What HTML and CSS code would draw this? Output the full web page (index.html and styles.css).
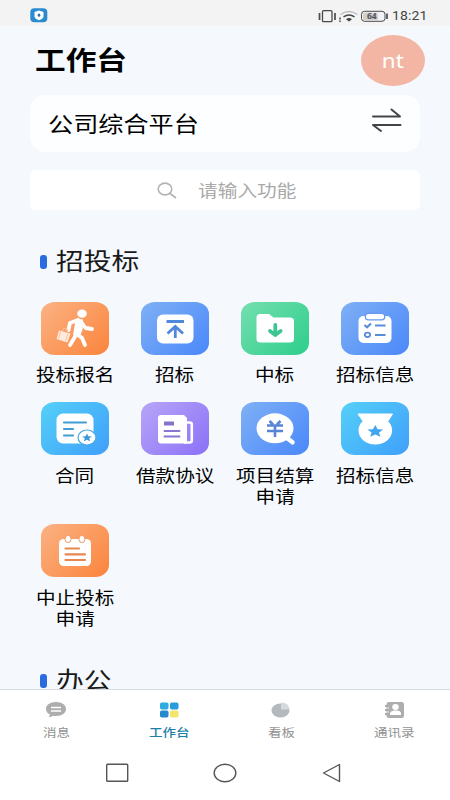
FILE: index.html
```html
<!DOCTYPE html>
<html lang="zh-CN">
<head>
<meta charset="utf-8">
<title>工作台</title>
<link rel="stylesheet" href="styles.css">
</head>
<body>
<header class="status">
  <svg class="app-badge" width="18" height="15" viewBox="0 0 18 15"><rect x=".3" y=".3" width="17" height="14" rx="4" fill="#2a8bd0"/><path d="M9 2.5 13.5 4v4.5Q13 11 9 12.2 5 11 4.500 8.500V4Z" fill="#fff"/><ellipse cx="9" cy="7.200" rx="1.300" ry="1.600" fill="#2472b4"/></svg>
  <svg class="signals" width="70" height="16" viewBox="0 0 70 16" fill="none" stroke="#4a4a4a">
    <rect x="4.500" y="2.700" width="9.500" height="11" rx="1" stroke-width="1.300"/>
    <path d="M1.500 5v7M17 5v7" stroke-width="1.700"/>
    <path d="M22 9.500v2M22 12.500v1.500" stroke-width="1.500"/>
    <path d="M22.500 6.500Q31 .5 39.500 6.500" stroke="#aaa"/><path d="M25.500 8.900Q31 5 36.500 8.900" stroke-width="1.500"/><path d="M28 11.200Q31 9 34 11.200L31 13.500Z" fill="#444" stroke="none"/>
    <rect x="43.500" y="3.300" width="23.500" height="10" rx="3"/><rect x="45" y="4.700" width="15" height="7.300" rx="1.500" fill="#cfcfcf" stroke="none"/><path d="M69 5.500v5.500" stroke-width="1.700"/>
    <text x="49" y="11.300" class="battery" stroke="none">64</text>
  </svg>
  <span class="clock">18:21</span>
</header>

<main class="content">
  <div class="head"><h1 class="wide">工作台</h1><div class="avatar"><span>nt</span></div></div>
  <div class="company"><span class="wide">公司综合平台</span>
    <svg width="32" height="26" viewBox="0 0 32 26" fill="none" stroke="#444" stroke-width="2" stroke-linecap="round" stroke-linejoin="round"><path d="M2 9.500H29L20.500 2.500M29.500 18H2L10 24"/></svg>
  </div>
  <div class="search">
    <svg width="20" height="17" viewBox="0 0 20 17" fill="none" stroke="#b3b3b3" stroke-width="1.600"><ellipse cx="8" cy="7" rx="6.800" ry="5.900"/><path d="M13 11.500 19 16"/></svg>
    <span class="wide">请输入功能</span>
  </div>
  <h2 class="section"><i></i><span class="wide">招投标</span></h2>
  <div class="grid">
    <div class="item"><svg class="tile orange" viewBox="0 0 68 53">
      <ellipse cx="41" cy="11.700" rx="4.800" ry="4.100" fill="#fff"/>
      <path d="M37 18 29 21 27.500 28M38 19 35 33 29 43M36 32 41 36 44 43M41 21 44.500 26 51 27" fill="none" stroke="#fff" stroke-width="3.800" stroke-linecap="round" stroke-linejoin="round"/>
      <path d="M35 16.500 42 17.500 41.500 28 38.500 35 32 33Z" fill="#fff"/>
      <path d="M18 28.500 29.500 31.500 26.500 40.500 15.500 37Z" fill="#ffe9dc"/><path d="M21.500 29 22.500 26.500 27 27.500 26 30.500M19.500 29.500 17.500 37M27 31.500 24.500 39" fill="none" stroke="#ffc29d" stroke-width="1"/>
    </svg><span class="label">投标报名</span></div>
    <div class="item"><svg class="tile blue" viewBox="0 0 68 53">
      <rect x="16" y="12.500" width="36.500" height="29" rx="6" fill="#fff"/>
      <path d="M25.500 19.500H43M34.300 36V25M26.500 31.500 34.300 24.500 42 31.500" fill="none" stroke="#5288dc" stroke-width="2.800"/>
    </svg><span class="label">招标</span></div>
    <div class="item"><svg class="tile green" viewBox="0 0 68 53">
      <path d="M19 12H28L32.500 15.500H49Q53 15.500 53 19V37Q53 40.500 49 40.500H19.500Q15.500 40.500 15.500 37V15.500Q15.500 12 19 12Z" fill="#fff"/>
      <path d="M34.300 23V33M29 29 34.300 33 39.600 29" fill="none" stroke="#3fc494" stroke-width="3.800" stroke-linecap="round" stroke-linejoin="round"/>
    </svg><span class="label">中标</span></div>
    <div class="item"><svg class="tile blue" viewBox="0 0 68 53">
      <rect x="17.500" y="14" width="33" height="27" rx="5" fill="#fff"/>
      <rect x="24.300" y="11.300" width="19.500" height="6.500" rx="3.250" fill="#fff" stroke="#6499ee" stroke-width="1.300"/>
      <path d="M23.500 23 26 25.300 30 21.500M34 23.500H44.500M34 33H44.500" fill="none" stroke="#588bdc" stroke-width="2.200"/><ellipse cx="26.500" cy="32.800" rx="2.700" ry="2.200" fill="none" stroke="#588bdc" stroke-width="1.800"/>
    </svg><span class="label">招标信息</span></div>

    <div class="item"><svg class="tile cyan" viewBox="0 0 68 53">
      <rect x="15.500" y="11.500" width="37" height="30" rx="6.500" fill="#fff"/>
      <path d="M23 20.500H45M23 27H32M23 33.500H32" stroke="#429cd5" stroke-width="2.200" stroke-linecap="round"/>
      <ellipse cx="46" cy="35.500" rx="9" ry="7.500" fill="#fff" stroke="#45a8e8" stroke-width="1.200"/><path d="M0-6 1.800-2 6.200-1.700 2.900 1.100 4 5.200 0 3-4 5.200-2.900 1.100-6.200-1.700-1.800-2Z" transform="translate(46 35.600) scale(.78 .68)" fill="#3a98d8"/>
    </svg><span class="label">合同</span></div>
    <div class="item"><svg class="tile purple" viewBox="0 0 68 53">
      <path d="M20 13H43L46 16V41.500H20Q17 41.500 17 38.500V16Q17 13 20 13Z" fill="#fff"/>
      <path d="M45 20.500H48.500Q50.800 20.500 50.800 22.500V38.500Q50.800 40.500 48.500 40.500H43" fill="none" stroke="#fff" stroke-width="2.600"/>
      <rect x="23" y="19.500" width="10" height="4" fill="#8674c9"/><path d="M23.500 29H38.500M23.500 34.500H38.500" stroke="#8b75d3" stroke-width="2" stroke-linecap="round"/>
    </svg><span class="label">借款协议</span></div>
    <div class="item"><svg class="tile blue" viewBox="0 0 68 53">
      <ellipse cx="34" cy="26.300" rx="18.500" ry="15" fill="#fff"/><path d="M46 36 51.500 40.300" stroke="#fff" stroke-width="4.500" stroke-linecap="round"/>
      <path d="M28.500 19 32 22.500M39.500 19 36 22.500M26 23.500H42M26 29H42M34 23V35" fill="none" stroke="#5784d4" stroke-width="2.600"/>
    </svg><span class="label">项目结算<br>申请</span></div>
    <div class="item"><svg class="tile cyan" viewBox="0 0 68 53">
      <path d="M17 12H51.500L47 19H22Z" fill="#fff" stroke="#fff" stroke-linejoin="round"/><ellipse cx="34.300" cy="28.500" rx="16.800" ry="14" fill="#fff"/><path d="M0-6 1.800-2 6.200-1.700 2.900 1.100 4 5.200 0 3-4 5.200-2.900 1.100-6.200-1.700-1.800-2Z" transform="translate(34.300 29.300) scale(1.280 1.060)" fill="#42a5ee"/>
    </svg><span class="label">招标信息</span></div>

    <div class="item"><svg class="tile orange" viewBox="0 0 68 53">
      <rect x="18" y="15" width="32" height="27" rx="4.500" fill="#fff"/>
      <rect x="24.200" y="11.500" width="5.800" height="7" rx="2.800" fill="#fff" stroke="#ee955f"/><rect x="38" y="11.500" width="5.800" height="7" rx="2.800" fill="#fff" stroke="#ee955f"/>
      <path d="M24.500 24.500H38M24.500 30.300H44M24.500 36H44" stroke="#e8874f" stroke-width="2.200" stroke-linecap="round"/>
    </svg><span class="label">中止投标<br>申请</span></div>
  </div>
  <h2 class="section next"><i></i><span class="wide">办公</span></h2>
</main>

<nav class="tabs">
  <a><svg width="22" height="18" viewBox="0 0 22 18"><path d="M11 1C17 1 21 4 21 8S17 15 11 15Q9.500 15 8.500 14.800L4 16.500 5 13.500Q1 11.500 1 8C1 4 5 1 11 1Z" fill="#adadad"/><path d="M6 6.500H16M6 10H16" stroke="#fff" stroke-width="1.700"/></svg><span>消息</span></a>
  <a class="active"><svg width="22" height="18" viewBox="0 0 22 18"><rect x="2" y="1.500" width="8.500" height="7" rx="1.800" fill="#2eace0"/><rect x="12" y="1.500" width="8.500" height="7" rx="1.800" fill="#2a9bda"/><rect x="2" y="9.500" width="8.500" height="7" rx="1.800" fill="#2589cd"/><rect x="12" y="9.500" width="8.500" height="7" rx="1.800" fill="#f5e56d"/></svg><span>工作台</span></a>
  <a><svg width="22" height="18" viewBox="0 0 22 18"><ellipse cx="10.500" cy="9.500" rx="9" ry="7" fill="#b2b9bf"/><path d="M11 8.500V1.500Q19 1.500 19.500 8.500Z" fill="#d3d9dd"/></svg><span>看板</span></a>
  <a><svg width="22" height="18" viewBox="0 0 22 18"><rect x="3.500" y="1" width="17.500" height="16" rx="2.500" fill="#adadad"/><path d="M2 5H5M2 9H5M2 13H5" stroke="#adadad" stroke-width="1.800"/><path d="M4.500 7H6M4.500 11H6" stroke="#fff"/><ellipse cx="12.500" cy="6" rx="3.300" ry="2.900" fill="#fff"/><path d="M7 14V12Q8 9.500 11 9.500H14Q17.500 9.500 18 12V14Z" fill="#fff"/></svg><span>通讯录</span></a>
</nav>
<footer class="keys">
  <svg width="24" height="20" viewBox="0 0 24 20"><rect x="1.700" y="1.200" width="21" height="17" rx=".8"/></svg>
  <svg width="24" height="20" viewBox="0 0 24 20"><ellipse cx="12" cy="10" rx="10.800" ry="8.800"/></svg>
  <svg width="24" height="20" viewBox="0 0 24 20"><path d="M18.500 1.500V18.500L2.500 10Z" stroke-linejoin="round"/></svg>
</footer>
</body>
</html>
```

FILE: styles.css
```css
* { box-sizing: border-box; }
body {
  margin: 0; width: 450px; height: 800px; overflow: hidden;
  display: flex; flex-direction: column;
  background: #fff; color: #111;
  font-family: "Noto Sans CJK SC", sans-serif;
}
svg { display: block; flex: none; }
h1, h2 { margin: 0; font-weight: 400; }
.wide { display: inline-block; transform: scaleX(1.18); transform-origin: left center; white-space: nowrap; }

.status { height: 26px; flex: none; background: #f3f3f3; display: flex; align-items: center; padding: 6px 0 0 30px; }
.app-badge { margin-top: -1px; }
.signals { margin-left: 270px; margin-top: -1px; }
.battery { font: 700 8.500px "Noto Sans", sans-serif; fill: #555; }
.clock { margin-left: 4px; font: 12.500px/16px Roboto, sans-serif; letter-spacing: .1px; color: #444; transform: scaleX(1.120); transform-origin: left center; }

.content { height: 664px; flex: none; overflow: hidden; background: #f5f9fd; border-bottom: 1px solid #d8dcdf; }
.head { height: 69px; display: flex; justify-content: space-between; padding: 9px 25px 0 35px; }
h1 { font-size: 26px; line-height: 48px; font-weight: 700; color: #000; }
.avatar { width: 64px; height: 51px; border-radius: 50%; background: #f3b6a4; color: #fff; display: flex; align-items: center; justify-content: center; font: 20px "Noto Sans", sans-serif; }
.avatar span { transform: scaleX(1.120); }
.company { margin: 0 30px; height: 57px; border-radius: 15px; background: #fcfeff; display: flex; justify-content: space-between; padding: 0 17px 0 18px; font-size: 21.300px; line-height: 55px; color: #000; }
.company svg { margin-top: 12px; }
.search { margin: 18px 30px 0; height: 40px; border-radius: 6px; background: #fff; display: flex; align-items: center; padding-left: 127px; gap: 21px; font-size: 16.700px; line-height: 40px; color: #aaa; }
.section { display: flex; align-items: center; gap: 9px; height: 40px; margin: 31px 0 0 40px; font-size: 23.500px; line-height: 40px; color: #1a1a1a; }
.section i { width: 7px; height: 14px; margin-top: 1px; border-radius: 3px; background: #2b6be0; }
.section .wide { margin-top: -2px; }
.grid { display: grid; grid-template-columns: repeat(4, 100px); row-gap: 17px; padding: 21px 25px 0; }
.item { display: flex; flex-direction: column; align-items: center; }
.tile { width: 68px; height: 53px; border-radius: 14px / 12px; }
.label { margin-top: 9px; font-size: 16.600px; line-height: 21px; text-align: center; color: #000; white-space: nowrap; transform: scaleX(1.180); }
.item:nth-child(n+5) .label { margin-top: 10px; }
.orange { background: linear-gradient(135deg, #fbb283, #fb843c); }
.blue { background: linear-gradient(135deg, #7fb0f5, #4a88fa); }
.green { background: linear-gradient(135deg, #75dfb0, #2dce8b); }
.cyan { background: linear-gradient(135deg, #55d0f8, #3f9ffa); }
.purple { background: linear-gradient(135deg, #b7a6f8, #8b70f7); }
.next { margin-top: 31px; }

.tabs { height: 55px; flex: none; display: grid; grid-template-columns: repeat(4, 112.500px); padding-top: 11px; }
.tabs a { display: flex; flex-direction: column; align-items: center; font-size: 11.500px; line-height: 16px; color: #929292; }
.tabs span { margin-top: 5px; transform: scaleX(1.180); }
.tabs .active { color: #1d7fa8; font-weight: 500; }
.keys { flex: none; height: 55px; display: flex; justify-content: center; gap: 84px; padding-top: 18px; }
.keys svg { fill: none; stroke: #555; stroke-width: 1.400; }
```
